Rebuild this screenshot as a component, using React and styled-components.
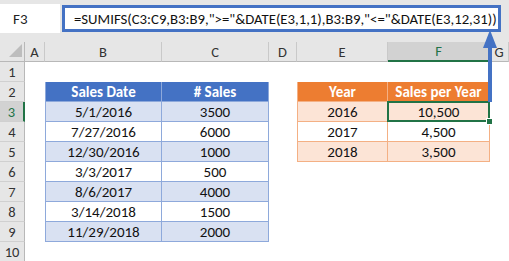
import React from 'react'
import styled, { createGlobalStyle, css } from 'styled-components'

const GlobalStyle = createGlobalStyle`
  html, body {
    margin: 0;
    padding: 0;
    background: #fff;
  }
  body {
    font-family: Carlito, Lato, "Noto Sans", sans-serif;
  }
`

const palettes = {
  blue: { head: '#4472c4', band: '#d9e1f2', line: '#8ea9db' },
  orange: { head: '#ed7d31', band: '#fce4d6', line: '#f4b084' },
}

const Window = styled.div`
  position: relative;
  width: 509px;
  height: 261px;
  overflow: hidden;
  background: #fff;
`

const FormulaBar = styled.div`
  display: flex;
  align-items: flex-start;
  gap: 2px;
  height: 42px;
  padding-top: 4px;
  box-sizing: border-box;
  background: #e6e6e6;
`

const NameBox = styled.div`
  width: 60px;
  height: 29px;
  padding-left: 13px;
  box-sizing: border-box;
  display: flex;
  align-items: center;
  background: #fff;
  font-size: 15px;
  color: #222;
`

const FormulaBox = styled.div`
  margin-top: 1px;
  width: 439px;
  height: 27px;
  padding-left: 9px;
  box-sizing: border-box;
  display: flex;
  align-items: center;
  border: 3px solid #4472c4;
  background: #fff;
  font-size: 14.75px;
  color: #111;
  white-space: nowrap;
  overflow: hidden;
`

const Sheet = styled.div`
  display: grid;
  grid-template-columns: 25px 20px 117px 107px 28px 91px 102px 19px;
  grid-auto-rows: 20px;
`

const Corner = styled.div`
  display: flex;
  align-items: flex-end;
  justify-content: flex-end;
  padding: 0 2px 4px 0;
  box-sizing: border-box;
  background: #e6e6e6;
  border-right: 1px solid #b8b8b8;
  border-bottom: 1px solid #b8b8b8;

  &::after {
    content: '';
    width: 0;
    height: 0;
    border-left: 13px solid transparent;
    border-bottom: 13px solid #bdbdbd;
  }
`

const ColHeader = styled.div`
  display: flex;
  align-items: center;
  justify-content: center;
  box-sizing: border-box;
  font-size: 14.5px;
  color: #333;
  background: ${p => (p.$active ? '#d2d2d2' : '#e6e6e6')};
  border-right: 1px solid #c9c9c9;
  border-bottom: ${p => (p.$active ? '2px solid #217346' : '1px solid #b8b8b8')};
  ${p => p.$active && css`color: #217346;`}
`

const RowHeader = styled.div`
  display: flex;
  align-items: center;
  justify-content: center;
  box-sizing: border-box;
  font-size: 14.5px;
  color: #333;
  background: ${p => (p.$active ? '#d2d2d2' : '#e6e6e6')};
  border-bottom: 1px solid #d0d0d0;
  border-right: ${p => (p.$active ? '2px solid #217346' : '1px solid #b8b8b8')};
  ${p => p.$active && css`color: #217346;`}
`

const fill = p => {
  if (!p.$tone) return '#fff'
  if (p.$kind === 'head') return palettes[p.$tone].head
  if (p.$kind === 'band') return palettes[p.$tone].band
  return '#fff'
}

const Cell = styled.div`
  position: relative;
  display: flex;
  align-items: center;
  justify-content: center;
  box-sizing: border-box;
  font-size: 15px;
  color: #111;
  white-space: nowrap;
  background: ${fill};
  ${p => p.$tone && css`
    border-right: 1px solid ${palettes[p.$tone].line};
    border-bottom: 1px solid ${palettes[p.$tone].line};
  `}
  ${p => p.$tone && p.$first && css`
    border-left: 1px solid ${palettes[p.$tone].line};
  `}
  ${p => p.$kind === 'head' && css`
    color: #fff;
    font-weight: 700;
  `}
  ${p => p.$selected && css`
    &::after {
      content: '';
      position: absolute;
      inset: -1px -1px -1px -1px;
      border: 2px solid #217346;
    }
    &::before {
      content: '';
      position: absolute;
      right: -4px;
      bottom: -4px;
      width: 5px;
      height: 5px;
      background: #217346;
      border: 1px solid #fff;
      z-index: 2;
    }
  `}
`

const Arrow = styled.svg`
  position: absolute;
  left: 482px;
  top: 30px;
`

const columns = ['A', 'B', 'C', 'D', 'E', 'F', 'G']

const blueRows = [
  ['5/1/2016', '3500'],
  ['7/27/2016', '6000'],
  ['12/30/2016', '1000'],
  ['3/3/2017', '500'],
  ['8/6/2017', '4000'],
  ['3/14/2018', '1500'],
  ['11/29/2018', '2000'],
]

const orangeRows = [
  ['2016', '10,500'],
  ['2017', '4,500'],
  ['2018', '3,500'],
]

const buildRow = r => {
  const cells = Array(7).fill(null).map(() => ({}))
  if (r === 2) {
    cells[1] = { tone: 'blue', kind: 'head', first: true, text: 'Sales Date' }
    cells[2] = { tone: 'blue', kind: 'head', text: '# Sales' }
    cells[4] = { tone: 'orange', kind: 'head', first: true, text: 'Year' }
    cells[5] = { tone: 'orange', kind: 'head', text: 'Sales per Year' }
  }
  if (r >= 3 && r <= 9) {
    const kind = r % 2 === 1 ? 'band' : 'plain'
    const [d, s] = blueRows[r - 3]
    cells[1] = { tone: 'blue', kind, first: true, text: d }
    cells[2] = { tone: 'blue', kind, text: s }
  }
  if (r >= 3 && r <= 5) {
    const kind = r % 2 === 1 ? 'band' : 'plain'
    const [y, s] = orangeRows[r - 3]
    cells[4] = { tone: 'orange', kind, first: true, text: y }
    cells[5] = { tone: 'orange', kind, text: s, selected: r === 3 }
  }
  return cells
}

const App = () => {
  const rows = Array.from({ length: 10 }, (_, i) => i + 1)
  return (
    <Window>
      <GlobalStyle />
      <FormulaBar>
        <NameBox>F3</NameBox>
        <FormulaBox>=SUMIFS(C3:C9,B3:B9,"&gt;="&amp;DATE(E3,1,1),B3:B9,"&lt;="&amp;DATE(E3,12,31))</FormulaBox>
      </FormulaBar>
      <Sheet>
        <Corner />
        {columns.map(c => (
          <ColHeader key={c} $active={c === 'F'}>{c}</ColHeader>
        ))}
        {rows.map(r => (
          <React.Fragment key={r}>
            <RowHeader $active={r === 3}>{r}</RowHeader>
            {buildRow(r).map((c, i) => (
              <Cell
                key={i}
                $tone={c.tone}
                $kind={c.kind}
                $first={c.first}
                $selected={c.selected}
              >
                {c.text}
              </Cell>
            ))}
          </React.Fragment>
        ))}
      </Sheet>
      <Arrow width="16" height="72" viewBox="0 0 16 72">
        <polygon points="8,0 15,18 1,18" fill="#4472c4" />
        <rect x="6" y="17" width="4" height="55" fill="#4472c4" />
      </Arrow>
    </Window>
  )
}

export default App
